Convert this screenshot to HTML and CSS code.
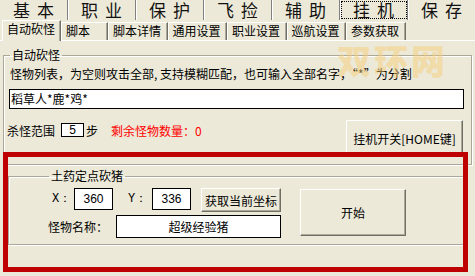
FILE: index.html
```html
<!DOCTYPE html>
<html>
<head>
<meta charset="utf-8">
<link rel="stylesheet" href="styles.css">
</head>
<body>
<div class="app">
  <div class="topbar">
    <div class="topbtn">基本</div>
    <div class="topbtn">职业</div>
    <div class="topbtn">保护</div>
    <div class="topbtn">飞捡</div>
    <div class="topbtn">辅助</div>
    <div class="topbtn topbtn-focus">挂机</div>
    <div class="topbtn">保存</div>
  </div>
  <div class="tabs">
    <div class="tab tab-active">自动砍怪</div>
    <div class="tab tab-short">脚本</div>
    <div class="tab">脚本详情</div>
    <div class="tab">通用设置</div>
    <div class="tab">职业设置</div>
    <div class="tab">巡航设置</div>
    <div class="tab">参数获取</div>
  </div>
  <div class="panel">
    <fieldset class="group group-auto">
      <legend class="legend legend-auto">自动砍怪</legend>
      <div class="hint">怪物列表，为空则攻击全部, 支持模糊匹配，也可输入全部名字，“*”为分割</div>
      <div class="field field-list">稻草人*鹿*鸡*</div>
      <div class="row-range">
        <div class="range">
          <span class="range-label">杀怪范围</span>
          <div class="field field-step">5</div>
          <span class="range-unit">步</span>
          <span class="remain">剩余怪物数量：0</span>
        </div>
        <div class="btn btn-toggle">挂机开关[HOME键]</div>
      </div>
    </fieldset>
    <fieldset class="group group-point">
      <legend class="legend legend-point">土药定点砍猪</legend>
      <div class="point-body">
        <div class="point-fields">
          <div class="coord-row">
            <span class="lbl lbl-x">X：</span>
            <div class="field field-coord">360</div>
            <span class="lbl lbl-y">Y：</span>
            <div class="field field-coord">336</div>
            <div class="btn btn-get">获取当前坐标</div>
          </div>
          <div class="name-row">
            <span class="lbl lbl-name">怪物名称：</span>
            <div class="field field-name">超级经验猪</div>
          </div>
        </div>
        <div class="btn btn-start">开始</div>
      </div>
    </fieldset>
  </div>
  <div class="watermark">双环网</div>
  <div class="highlight"></div>
</div>
</body>
</html>
```
FILE: styles.css
```css
* { box-sizing: border-box; }
html, body { margin: 0; padding: 0; }
body {
  background: #ECE9D8;
  font-family: "Noto Sans CJK SC", "Liberation Sans", sans-serif;
  font-size: 12px;
  color: #000;
  overflow: hidden;
}
.app {
  position: relative;
  width: 475px;
  height: 276px;
}

/* top buttons */
.topbar {
  display: flex;
  height: 20px;
}
.topbtn {
  flex: 1;
  height: 20px;
  font-size: 17px;
  line-height: 20px;
  letter-spacing: 7px;
  padding-left: 7px;
  text-align: center;
  color: #111;
  border-right: 1px solid #808080;
  box-shadow: 1px 0 0 #fff;
  position: relative;
}
.topbtn:last-child { border-right: none; box-shadow: none; }
.topbtn-focus {
  outline: 1px dotted #000;
  outline-offset: -2px;
}

/* tabs */
.tabs {
  display: flex;
  height: 20px;
  align-items: flex-end;
}
.tab {
  flex: 0 0 59.5px;
  height: 18px;
  padding-left: 4px;
  line-height: 14px;
  padding-top: 1px;
  white-space: nowrap;
  border-top: 1px solid #fff;
  border-left: 1px solid #fff;
  border-right: 1px solid #716F64;
  box-shadow: inset -1px 0 0 #ACA899;
}
.tab-active {
  flex-basis: 59px;
  margin-left: 2px;
  height: 21px;
  margin-bottom: -1px;
  padding-top: 1px;
  background: #ECE9D8;
  position: relative;
  z-index: 1;
}
.tab-short { flex-basis: 47px; }

/* panel */
.panel {
  border-top: 1px solid #fff;
  height: 236px;
  padding-top: 7px;
}

.group {
  margin: 0;
  padding: 0;
  border: 1px solid #ACA899;
  box-shadow: inset 1px 1px 0 #fff, 1px 1px 0 #fff;
  min-width: 0;
}
.legend {
  padding: 0 2px;
  line-height: 14px;
  margin-left: 1px;
}

.group-auto {
  margin-left: 3px;
  width: 469px;
  padding: 0 7px 7px 5px;
}
.hint {
  margin-top: 4px;
  line-height: 16px;
  padding-left: 1px;
  white-space: nowrap;
}
.field {
  background: #fff;
  border: 1px solid #000;
  white-space: nowrap;
}
.field-list {
  margin-top: 7px;
  height: 20px;
  line-height: 18px;
  padding-left: 1px;
}
.row-range {
  margin-top: 11px;
  display: flex;
  justify-content: space-between;
  align-items: flex-start;
}
.range {
  display: flex;
  align-items: center;
  margin-top: 3px;
  margin-left: -2px;
  height: 14px;
}
.range-label { width: 54px; }
.field-step {
  width: 23px;
  height: 14px;
  line-height: 12px;
  text-align: center;
  font-family: "Liberation Sans", sans-serif;
}
.range-unit { margin-left: 2px; }
.remain {
  margin-left: 13px;
  color: #FF0000;
}

.btn {
  background: #ECE9D8;
  border-top: 1px solid #fff;
  border-left: 1px solid #fff;
  border-right: 1px solid #716F64;
  border-bottom: 1px solid #716F64;
  box-shadow: inset -1px -1px 0 #ACA899;
  display: flex;
  align-items: center;
  justify-content: center;
  white-space: nowrap;
}
.btn-toggle {
  width: 117px;
  height: 37px;
  margin-right: 1px;
}

/* group 2 */
.group-point {
  margin-top: 4px;
  margin-left: 8px;
  width: 458px;
  padding: 0 0 6px 39px;
}
.point-body {
  display: flex;
  align-items: flex-start;
}
.coord-row {
  margin-top: 5px;
  margin-left: 4px;
  display: flex;
  align-items: flex-start;
}
.lbl {
  line-height: 22px;
  white-space: nowrap;
}
.lbl-x { width: 22px; font-family: "Liberation Mono", monospace; }
.lbl-y { width: 24px; margin-left: 15px; font-family: "Liberation Mono", monospace; }
.field-coord {
  width: 39px;
  height: 22px;
  line-height: 20px;
  text-align: center;
  font-family: "Liberation Sans", sans-serif;
}
.btn-get {
  margin-left: 10px;
  width: 80px;
  height: 24px;
}
.name-row {
  margin-top: 3px;
  display: flex;
  align-items: center;
}
.lbl-name { width: 68px; line-height: 23px; }
.field-name {
  width: 165px;
  height: 23px;
  line-height: 21px;
  text-align: center;
}
.btn-start {
  margin-left: 19px;
  margin-top: 6px;
  width: 106px;
  height: 47px;
}

/* overlays */
.watermark {
  position: absolute;
  left: 337px;
  top: 44px;
  font-size: 34px;
  font-weight: 900;
  letter-spacing: 3px;
  line-height: 32px;
  color: rgba(246, 205, 120, 0.5);
  pointer-events: none;
}
.highlight {
  position: absolute;
  left: 3px;
  top: 152px;
  width: 465px;
  height: 120px;
  border: 5px solid #BF0000;
  pointer-events: none;
}
```
